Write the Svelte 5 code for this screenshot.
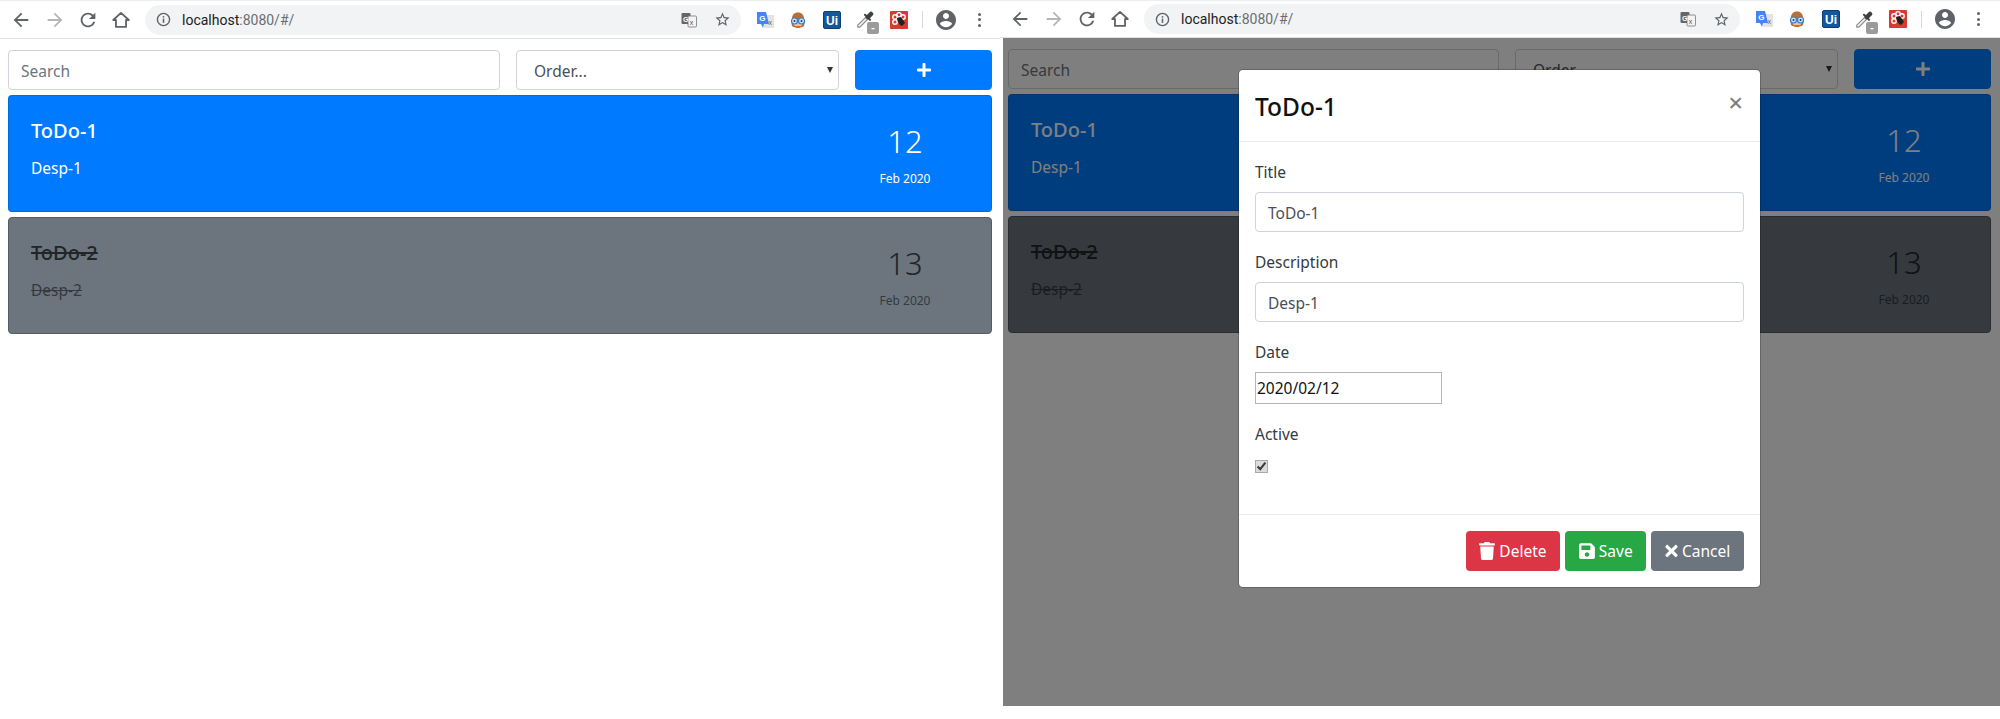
<script>
    const todos = [
        { id: 1, title: 'ToDo-1', desc: 'Desp-1', day: 12, month: 'Feb 2020', active: true },
        { id: 2, title: 'ToDo-2', desc: 'Desp-2', day: 13, month: 'Feb 2020', active: false }
    ];
</script>

{#snippet browserBar()}
    <header class="chrome">
        <svg class="nav" viewBox="0 0 24 24"><path d="M20 11H7.83l5.59-5.59L12 4l-8 8 8 8 1.41-1.41L7.83 13H20v-2z" /></svg>
        <svg class="nav off" viewBox="0 0 24 24"><path d="M4 13h12.17l-5.59 5.59L12 20l8-8-8-8-1.41 1.41L16.17 11H4v2z" /></svg>
        <svg class="nav" viewBox="0 0 24 24"><path d="M17.65 6.35C16.2 4.9 14.21 4 12 4c-4.42 0-7.99 3.58-7.99 8s3.57 8 7.99 8c3.73 0 6.84-2.55 7.73-6h-2.08c-.82 2.33-3.04 4-5.65 4-3.31 0-6-2.69-6-6s2.69-6 6-6c1.66 0 3.14.69 4.22 1.78L13 11h7V4l-2.35 2.35z" /></svg>
        <svg class="nav" viewBox="0 0 24 24"><path d="M12 4.2 3.5 12H6.5v7.5h11V12h3z" fill="none" stroke="#5f6368" stroke-width="2" stroke-linejoin="round" /></svg>
        <div class="omnibox">
            <svg class="info" viewBox="0 0 16 16"><circle cx="8" cy="8" r="6.5" fill="none" stroke="#5f6368" stroke-width="1.5" /><rect x="7.2" y="7" width="1.6" height="4.6" fill="#5f6368" /><rect x="7.2" y="4.4" width="1.6" height="1.6" fill="#5f6368" /></svg>
            <span class="url">localhost<span class="url-rest">:8080/#/</span></span>
            <svg class="translate" viewBox="0 0 16 16">
                <rect x="0.5" y="1" width="9" height="11" rx="1" fill="#666" />
                <rect x="7" y="4" width="8.5" height="11" rx="1" fill="#f1f3f4" stroke="#777" stroke-width="0.8" />
                <text x="2" y="9.5" font-size="7" font-weight="700" fill="#fff" font-family="Liberation Sans">G</text>
                <text x="8.8" y="12.5" font-size="7" fill="#555" font-family="Liberation Sans">x</text>
            </svg>
            <svg class="star" viewBox="0 0 24 24"><path d="M22 9.24l-7.19-.62L12 2 9.19 8.63 2 9.24l5.46 4.73L5.82 21 12 17.27 18.18 21l-1.63-7.03L22 9.24zM12 15.4l-3.76 2.27 1-4.28-3.32-2.88 4.38-.38L12 6.1l1.71 4.04 4.38.38-3.32 2.88 1 4.28L12 15.4z" /></svg>
        </div>
        <div class="extensions">
            <span class="ext">
                <svg width="18" height="18" viewBox="0 0 18 18">
                    <rect x="8" y="4" width="10" height="13" fill="#e3e3e3" />
                    <path d="M1 1h9l3 12H8l-1 4-2-4H1z" fill="#4285f4" />
                    <text x="3.2" y="10" font-size="8" font-weight="700" fill="#fff" font-family="Liberation Sans">G</text>
                    <text x="12.4" y="14" font-size="7" fill="#666" font-family="Liberation Sans">x</text>
                </svg>
            </span>
            <span class="ext">
                <svg width="18" height="18" viewBox="0 0 18 18">
                    <path d="M3 8C3 3 6 1.5 9 1.5S15 3 15 8l1 2-1 5c-2 2-10 2-12 0l-1-5z" fill="#b5703a" />
                    <path d="M4 10c0 4 2 6 5 6s5-2 5-6z" fill="#eec39a" />
                    <circle cx="5.5" cy="10" r="3" fill="#cfe6fb" stroke="#2f7ed8" stroke-width="1.2" />
                    <circle cx="12.5" cy="10" r="3" fill="#cfe6fb" stroke="#2f7ed8" stroke-width="1.2" />
                    <circle cx="5.5" cy="10" r="1" fill="#234" />
                    <circle cx="12.5" cy="10" r="1" fill="#234" />
                    <path d="M6 15h6l-1 2H7z" fill="#d9692b" />
                </svg>
            </span>
            <span class="ext">
                <svg width="18" height="18" viewBox="0 0 18 18">
                    <rect x="0.5" y="0.5" width="17" height="17" rx="1.5" fill="#14589c" stroke="#0d3f73" />
                    <text x="9" y="13.6" text-anchor="middle" font-size="12" font-weight="700" fill="#fff" font-family="Liberation Sans">Ui</text>
                </svg>
            </span>
            <span class="ext dropper">
                <svg width="24" height="24" viewBox="0 0 24 24">
                    <path d="M.8 14.2 8.5 6.500l2 2-7.700 7.700H.8z" fill="#f4f4f4" stroke="#8c8c8c" stroke-width="1.200" />
                    <path d="M11 6l3-3" stroke="#3c4043" stroke-width="4.500" stroke-linecap="round" />
                    <path d="M8 3.800l5 5" stroke="#3c4043" stroke-width="2" stroke-linecap="round" />
                    <rect x="10" y="11" width="12" height="12" rx="2" fill="#9b9b9b" />
                    <rect x="14.500" y="17" width="3" height="1.300" fill="#fff" />
                </svg>
            </span>
            <span class="ext">
                <svg width="18" height="18" viewBox="0 0 18 18">
                    <rect width="18" height="18" rx="1" fill="#d93a2f" />
                    <g fill="none" stroke="#fff" stroke-width="1.400">
                        <circle cx="5" cy="6" r="2.200" />
                        <circle cx="9" cy="3.800" r="2.200" />
                        <circle cx="13" cy="6" r="2.200" />
                        <circle cx="5" cy="11" r="2.200" />
                    </g>
                    <path d="M7 7l4-1 4 6-3 3-2-1-2-3z" fill="#222" />
                </svg>
            </span>
        </div>
        <span class="sep"></span>
        <svg class="avatar" viewBox="2 2 20 20"><path d="M12 2C6.48 2 2 6.48 2 12s4.48 10 10 10 10-4.48 10-10S17.52 2 12 2zm0 3c1.660 0 3 1.340 3 3s-1.340 3-3 3-3-1.340-3-3 1.340-3 3-3zm0 14.200c-2.500 0-4.710-1.280-6-3.220.030-1.990 4-3.080 6-3.080 1.990 0 5.970 1.090 6 3.080-1.290 1.940-3.500 3.220-6 3.220z" /></svg>
        <span class="dots"><i></i><i></i><i></i></span>
    </header>
{/snippet}

{#snippet todoApp()}
    <div class="toolbar">
        <input class="control search" type="text" placeholder="Search" />
        <div class="select-wrap">
            <select class="control order">
                <option>Order...</option>
            </select>
            <span class="caret"></span>
        </div>
        <button class="add" aria-label="Add">
            <svg width="14" height="16" viewBox="0 0 448 512"><path fill="currentColor" d="M416 208H272V64c0-17.670-14.330-32-32-32h-32c-17.670 0-32 14.330-32 32v144H32c-17.670 0-32 14.330-32 32v32c0 17.670 14.330 32 32 32h144v144c0 17.670 14.330 32 32 32h32c17.670 0 32-14.330 32-32V304h144c17.670 0 32-14.330 32-32v-32c0-17.670-14.330-32-32-32z" /></svg>
        </button>
    </div>
    {#each todos as todo (todo.id)}
        <article class="card" class:done={!todo.active}>
            <div class="card-main">
                <h5>{todo.title}</h5>
                <p>{todo.desc}</p>
            </div>
            <div class="card-date">
                <div class="day">{todo.day}</div>
                <small>{todo.month}</small>
            </div>
        </article>
    {/each}
{/snippet}

<main class="screens">
    <section class="pane left">
        {@render browserBar()}
        <div class="page">
            {@render todoApp()}
        </div>
    </section>

    <section class="pane right">
        {@render browserBar()}
        <div class="page">
            {@render todoApp()}
            <div class="backdrop">
                <div class="modal">
                    <div class="modal-header">
                        <h4>ToDo-1</h4>
                        <span class="close">×</span>
                    </div>
                    <div class="modal-body">
                        <label for="m-title">Title</label>
                        <input id="m-title" class="control" type="text" value="ToDo-1" />
                        <label for="m-desc">Description</label>
                        <input id="m-desc" class="control" type="text" value="Desp-1" />
                        <label for="m-date">Date</label>
                        <input id="m-date" class="date" type="text" value="2020/02/12" />
                        <label for="m-active">Active</label>
                        <input id="m-active" class="check" type="checkbox" checked />
                    </div>
                    <div class="modal-footer">
                        <button class="btn red">
                            <svg width="16" height="18" viewBox="0 0 448 512"><path fill="currentColor" d="M432 32H312l-9.400-18.700A24 24 0 0 0 281.100 0H166.800a23.720 23.720 0 0 0-21.400 13.300L136 32H16A16 16 0 0 0 0 48v32a16 16 0 0 0 16 16h416a16 16 0 0 0 16-16V48a16 16 0 0 0-16-16zM53.200 467a48 48 0 0 0 47.900 45h245.800a48 48 0 0 0 47.900-45L416 128H32z" /></svg>
                            Delete
                        </button>
                        <button class="btn green">
                            <svg width="16" height="18" viewBox="0 0 448 512"><path fill="currentColor" d="M433.941 129.941l-83.882-83.882A48 48 0 0 0 316.118 32H48C21.490 32 0 53.490 0 80v352c0 26.510 21.490 48 48 48h352c26.510 0 48-21.490 48-48V163.882a48 48 0 0 0-14.059-33.941zM224 416c-35.346 0-64-28.654-64-64 0-35.346 28.654-64 64-64s64 28.654 64 64c0 35.346-28.654 64-64 64zm96-304.520V212c0 6.627-5.373 12-12 12H76c-6.627 0-12-5.373-12-12V108c0-6.627 5.373-12 12-12h228.520c3.183 0 6.235 1.264 8.485 3.515l3.480 3.480A11.996 11.996 0 0 1 320 111.480z" /></svg>
                            Save
                        </button>
                        <button class="btn gray">
                            <svg width="13" height="18" viewBox="0 0 352 512"><path fill="currentColor" d="M242.720 256l100.070-100.070c12.280-12.280 12.280-32.190 0-44.480l-22.240-22.240c-12.280-12.280-32.190-12.280-44.480 0L176 189.280 75.930 89.210c-12.280-12.280-32.190-12.280-44.480 0L9.210 111.450c-12.280 12.280-12.280 32.190 0 44.480L109.280 256 9.210 356.070c-12.280 12.280-12.280 32.190 0 44.480l22.240 22.240c12.280 12.280 32.200 12.280 44.480 0L176 322.720l100.070 100.070c12.280 12.280 32.200 12.280 44.480 0l22.240-22.240c12.280-12.280 12.280-32.190 0-44.480L242.720 256z" /></svg>
                            Cancel
                        </button>
                    </div>
                </div>
            </div>
        </div>
    </section>
</main>

<style>
    :global(body) {
        margin: 0;
        background: #fff;
        color: #212529;
        font-family: "Noto Sans", "Open Sans", sans-serif;
        font-size: 15.5px;
        overflow: hidden;
    }

    .screens {
        display: flex;
        width: 2000px;
        height: 719px;
    }

    .pane {
        width: 1000px;
        flex: none;
    }

    /* browser toolbar */
    .chrome {
        display: flex;
        align-items: center;
        box-sizing: border-box;
        height: 39px;
        padding-left: 10px;
        background: #fff;
        border-bottom: 1px solid #dfe1e5;
        border-top: 1px solid #eceef0;
    }

    .right .chrome {
        height: 38px;
        padding-left: 9px;
    }

    .nav {
        width: 22px;
        height: 22px;
        flex: none;
        margin-right: 12px;
        fill: #5f6368;
    }

    .nav.off {
        fill: #b4b6b8;
        margin-right: 11px;
    }

    .nav:nth-child(3) {
        margin-right: 11px;
    }

    .omnibox {
        display: flex;
        align-items: center;
        box-sizing: border-box;
        width: 596px;
        height: 30px;
        margin-left: 1px;
        padding: 0 10px 0 11px;
        background: #f1f3f4;
        border-radius: 15px;
        flex: none;
    }

    .info {
        width: 15px;
        height: 15px;
        flex: none;
    }

    .url {
        margin-left: 11px;
        font-family: Roboto, sans-serif;
        font-size: 14px;
        color: #202124;
    }

    .url-rest {
        color: #6a6e72;
    }

    .translate {
        width: 16px;
        height: 16px;
        margin-left: auto;
    }

    .star {
        width: 17px;
        height: 17px;
        margin-left: 17px;
        fill: #5f6368;
    }

    .extensions {
        display: flex;
        width: 168px;
        margin-left: 7px;
        flex: none;
    }

    .ext {
        display: flex;
        align-items: center;
        justify-content: center;
        flex: 1;
        height: 18px;
    }

    .dropper svg {
        margin: 7px 0 0 7px;
        flex: none;
    }

    .sep {
        width: 1px;
        height: 17px;
        margin-left: 6px;
        background: #d6d8da;
        flex: none;
    }

    .avatar {
        width: 20px;
        height: 20px;
        margin-left: 13px;
        fill: #5f6368;
        flex: none;
    }

    .dots {
        display: flex;
        flex-direction: column;
        gap: 2.500px;
        margin-left: 22px;
    }

    .dots i {
        width: 3px;
        height: 3px;
        border-radius: 50%;
        background: #5f6368;
    }

    /* app */
    .page {
        position: relative;
        padding: 11px 8px 0;
    }

    .right .page {
        height: 668px;
        box-sizing: border-box;
        margin-left: 3px;
        padding: 11px 9px 0 5px;
    }

    .toolbar {
        display: flex;
        gap: 16px;
        height: 40px;
        margin-bottom: 5px;
    }

    .control {
        display: block;
        box-sizing: border-box;
        width: 100%;
        height: 40px;
        padding: 8px 12px 6px;
        font: inherit;
        font-size: 15.5px;
        color: #495057;
        background: #fff;
        border: 1px solid #ced4da;
        border-radius: 4px;
        outline: none;
    }

    .control::placeholder {
        color: #6c757d;
        opacity: 1;
    }

    .search {
        flex: 1;
        min-width: 0;
        width: auto;
    }

    .select-wrap {
        position: relative;
        width: 323px;
        flex: none;
    }

    .order {
        appearance: none;
        padding-left: 17px;
    }

    .caret {
        position: absolute;
        top: 17px;
        right: 6px;
        border-left: 3.500px solid transparent;
        border-right: 3.500px solid transparent;
        border-top: 6px solid #333;
    }

    .add {
        display: flex;
        align-items: center;
        justify-content: center;
        width: 137px;
        flex: none;
        padding: 0;
        color: #fff;
        background: #007bff;
        border: 1px solid #007bff;
        border-radius: 4px;
    }

    .card {
        display: flex;
        box-sizing: border-box;
        height: 117px;
        margin-bottom: 5px;
        color: #fff;
        background: #007bff;
        border: 1px solid rgba(0, 0, 0, 0.125);
        border-radius: 4px;
    }

    .card.done {
        color: #212529;
        background: #6c757d;
        border-color: #555b61;
    }

    .card-main {
        flex: 1;
        padding: 21px 22px 0;
    }

    .card-main h5 {
        margin: 0 0 12px;
        font-size: 20px;
        font-weight: 500;
        line-height: 28px;
    }

    .card-main p {
        margin: 0;
        font-size: 15.5px;
        line-height: 22px;
    }

    .card.done h5,
    .card.done p {
        text-decoration: line-through;
    }

    .card.done p {
        color: #343a40;
    }

    .card-date {
        width: 172px;
        padding-top: 24px;
        text-align: center;
    }

    .day {
        font-size: 31px;
        font-weight: 300;
        line-height: 42px;
    }

    .card-date small {
        display: block;
        margin-top: 8px;
        font-size: 12px;
        line-height: 17px;
    }

    .card.done small {
        color: #343a40;
    }

    /* modal */
    .backdrop {
        position: absolute;
        inset: 0;
        display: flex;
        justify-content: center;
        align-items: flex-start;
        box-sizing: border-box;
        padding: 31px 4px 0 0;
        background: rgba(0, 0, 0, 0.5);
    }

    .modal {
        box-sizing: border-box;
        width: 523px;
        background: #fff;
        border: 1px solid rgba(0, 0, 0, 0.2);
        border-radius: 5px;
        background-clip: padding-box;
    }

    .modal-header {
        display: flex;
        justify-content: space-between;
        box-sizing: border-box;
        height: 72px;
        padding: 0 17px 0 16px;
        border-bottom: 1px solid #e9ecef;
    }

    .modal-header h4 {
        margin: 0;
        padding-top: 20px;
        font-size: 24.500px;
        font-weight: 500;
        line-height: 34px;
        color: #111;
    }

    .close {
        margin-top: 13px;
        font-size: 26px;
        font-weight: 500;
        line-height: 38px;
        color: #000;
        opacity: 0.5;
    }

    .modal-body {
        height: 372px;
        box-sizing: border-box;
        padding: 19px 16px 0;
    }

    .modal-body label {
        display: block;
        height: 22px;
        margin-bottom: 9px;
        line-height: 22px;
        color: #343a40;
    }

    .modal-body .control {
        margin-bottom: 19px;
    }

    .date {
        display: block;
        box-sizing: border-box;
        width: 187px;
        height: 32px;
        margin-bottom: 19px;
        padding: 1px;
        font: inherit;
        font-size: 15.500px;
        color: #111;
        border: 1px solid #b5b5b5;
        outline: none;
    }

    .check {
        display: block;
        width: 13px;
        height: 13px;
        margin: 15px 0 0;
        accent-color: #dcdcdc;
        outline: 1px solid #aaa;
        outline-offset: -1px;
        border-radius: 2px;
    }

    .modal-footer {
        display: flex;
        justify-content: flex-end;
        gap: 5px;
        padding: 16px;
        border-top: 1px solid #e9ecef;
    }

    .btn {
        display: flex;
        align-items: center;
        gap: 4px;
        box-sizing: border-box;
        height: 40px;
        padding: 0 12.700px;
        font: inherit;
        font-size: 15.500px;
        color: #fff;
        border: 1px solid transparent;
        border-radius: 4px;
    }

    .red {
        background: #dc3545;
    }

    .green {
        background: #28a745;
    }

    .gray {
        background: #6c757d;
    }
</style>
